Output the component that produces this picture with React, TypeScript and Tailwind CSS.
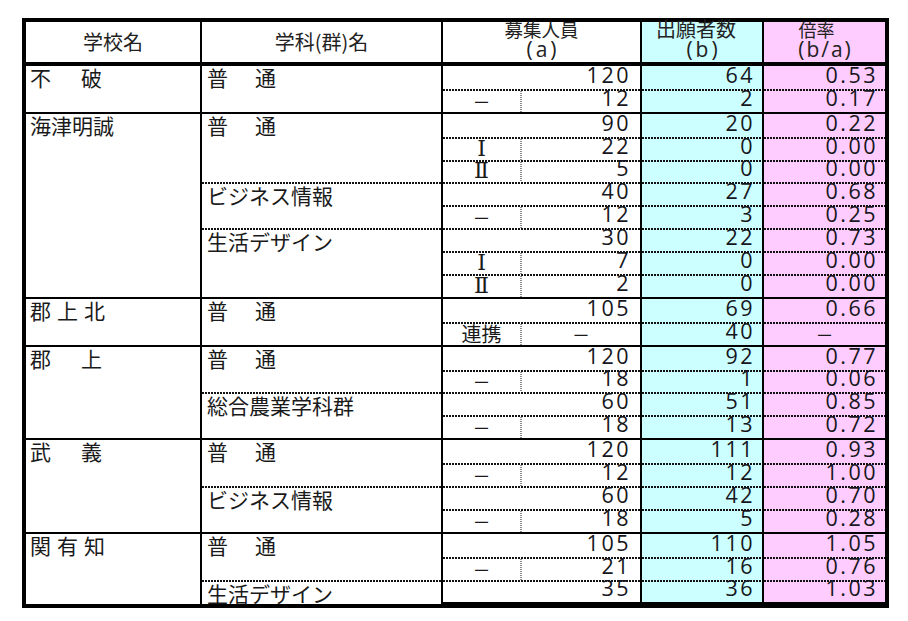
import React from 'react'

type Row = { l?: string; a: string; b: string; r: string; dash?: boolean }
type Dept = { name: string; track?: string; rows: Row[] }
type School = { name: string; track: string; depts: Dept[] }

const FUTSU = 'tracking-[27px]'
const NUM =
  "font-['Open_Sans','Noto_Sans_CJK_JP',sans-serif] font-normal text-[21.5px] leading-[18px] tracking-[2.5px] text-[#161620]"

const schools: School[] = [
  {
    name: '不破',
    track: 'tracking-[30px]',
    depts: [
      {
        name: '普通',
        track: FUTSU,
        rows: [
          { a: '120', b: '64', r: '0.53' },
          { l: '－', a: '12', b: '2', r: '0.17' },
        ],
      },
    ],
  },
  {
    name: '海津明誠',
    track: '',
    depts: [
      {
        name: '普通',
        track: FUTSU,
        rows: [
          { a: '90', b: '20', r: '0.22' },
          { l: 'Ⅰ', a: '22', b: '0', r: '0.00' },
          { l: 'Ⅱ', a: '5', b: '0', r: '0.00' },
        ],
      },
      {
        name: 'ビジネス情報',
        rows: [
          { a: '40', b: '27', r: '0.68' },
          { l: '－', a: '12', b: '3', r: '0.25' },
        ],
      },
      {
        name: '生活デザイン',
        rows: [
          { a: '30', b: '22', r: '0.73' },
          { l: 'Ⅰ', a: '7', b: '0', r: '0.00' },
          { l: 'Ⅱ', a: '2', b: '0', r: '0.00' },
        ],
      },
    ],
  },
  {
    name: '郡上北',
    track: 'tracking-[6px]',
    depts: [
      {
        name: '普通',
        track: FUTSU,
        rows: [
          { a: '105', b: '69', r: '0.66' },
          { l: '連携', a: '－', b: '40', r: '－', dash: true },
        ],
      },
    ],
  },
  {
    name: '郡上',
    track: 'tracking-[30px]',
    depts: [
      {
        name: '普通',
        track: FUTSU,
        rows: [
          { a: '120', b: '92', r: '0.77' },
          { l: '－', a: '18', b: '1', r: '0.06' },
        ],
      },
      {
        name: '総合農業学科群',
        rows: [
          { a: '60', b: '51', r: '0.85' },
          { l: '－', a: '18', b: '13', r: '0.72' },
        ],
      },
    ],
  },
  {
    name: '武義',
    track: 'tracking-[30px]',
    depts: [
      {
        name: '普通',
        track: FUTSU,
        rows: [
          { a: '120', b: '111', r: '0.93' },
          { l: '－', a: '12', b: '12', r: '1.00' },
        ],
      },
      {
        name: 'ビジネス情報',
        rows: [
          { a: '60', b: '42', r: '0.70' },
          { l: '－', a: '18', b: '5', r: '0.28' },
        ],
      },
    ],
  },
  {
    name: '関有知',
    track: 'tracking-[6px]',
    depts: [
      {
        name: '普通',
        track: FUTSU,
        rows: [
          { a: '105', b: '110', r: '1.05' },
          { l: '－', a: '21', b: '16', r: '0.76' },
        ],
      },
      {
        name: '生活デザイン',
        rows: [{ a: '35', b: '36', r: '1.03' }],
      },
    ],
  },
]

function HDots() {
  return (
    <div className="h-[2px] w-full shrink-0 bg-[linear-gradient(90deg,#111_67%,transparent_67%)] bg-[length:3px_2px]" />
  )
}

function Label({ text }: { text?: string }) {
  if (!text) return null
  if (text === 'Ⅰ' || text === 'Ⅱ') {
    return (
      <span className="font-['DejaVu_Serif','Liberation_Serif',serif] text-[22px] leading-[20px] text-[#1a1a1a]">
        {text}
      </span>
    )
  }
  if (text === '－') {
    return <span className="text-[18px] leading-[20px] text-[#1a1a1a]">－</span>
  }
  return <span className="text-[20px] leading-[20px] text-[#1a1a1a]">{text}</span>
}

function SubRow({ row, dotted }: { row: Row; dotted: boolean }) {
  return (
    <div className="flex h-[22.9px] gap-[2px]">
      <div className="flex w-[197px] flex-col bg-white">
        {dotted && <HDots />}
        <div className="flex min-h-0 flex-1 items-end">
          <div className="flex h-full w-[77px] items-end justify-center pb-[1px]">
            <Label text={row.l} />
          </div>
          {row.l ? (
            <div className="h-full w-[2px] bg-[linear-gradient(#8a8a8a_50%,transparent_50%)] bg-[length:2px_2px]" />
          ) : (
            <div className="w-[2px]" />
          )}
          {row.dash ? (
            <div className="flex h-full flex-1 items-end justify-center pb-[1px]">
              <span className="text-[18px] leading-[20px] text-[#1a1a1a]">－</span>
            </div>
          ) : (
            <div className={`flex-1 pb-[5px] pr-[9px] text-right ${NUM}`}>{row.a}</div>
          )}
        </div>
      </div>
      <div className="flex w-[120px] flex-col bg-[#ccffff]">
        {dotted && <HDots />}
        <div className="flex min-h-0 flex-1 items-end justify-end pb-[5px] pr-[7px]">
          <span className={NUM}>{row.b}</span>
        </div>
      </div>
      <div className="flex w-[121px] flex-col bg-[#ffccff]">
        {dotted && <HDots />}
        {row.dash ? (
          <div className="flex min-h-0 flex-1 items-end justify-center pb-[1px]">
            <span className="text-[18px] leading-[20px] text-[#1a1a1a]">－</span>
          </div>
        ) : (
          <div className="flex min-h-0 flex-1 items-end justify-end pb-[5px] pr-[7px]">
            <span className={NUM}>{row.r}</span>
          </div>
        )}
      </div>
    </div>
  )
}

function Group({ school }: { school: School }) {
  return (
    <div className="flex gap-[2px]">
      <div className="w-[174px] bg-white pl-[4px]">
        <div className={`text-[21px] leading-[22px] text-[#1a1a1a] ${school.track}`}>{school.name}</div>
      </div>
      <div className="flex flex-col">
        {school.depts.map((d, di) => (
          <div key={di} className="flex gap-[2px]">
            <div className="flex w-[239px] flex-col bg-white">
              {di > 0 && <HDots />}
              <div className={`pl-[5px] text-[21px] leading-[22px] text-[#1a1a1a] ${d.track ?? ''}`}>{d.name}</div>
            </div>
            <div className="flex flex-col">
              {d.rows.map((r, ri) => (
                <SubRow key={ri} row={r} dotted={di > 0 || ri > 0} />
              ))}
            </div>
          </div>
        ))}
      </div>
    </div>
  )
}

export default function App() {
  return (
    <div className="min-h-screen bg-white pl-[22px] pt-[18px] font-['Noto_Sans_CJK_JP','Noto_Sans',sans-serif]">
      <div className="flex w-[867px] flex-col gap-[2px] border-4 border-black bg-black">
        <div className="mb-[2px] flex h-[40px] gap-[2px] text-[#222]">
          <div className="flex w-[174px] items-center justify-center bg-white text-[20px]">学校名</div>
          <div className="flex w-[239px] items-center justify-center bg-white text-[20px]">学科(群)名</div>
          <div className="flex w-[197px] flex-col items-center bg-white">
            <div className="-mt-[2px] text-[18.5px] leading-[18px]">募集人員</div>
            <div className="pl-[3px] font-['Open_Sans',sans-serif] text-[21px] leading-[22px] tracking-[3px]">
              (a)
            </div>
          </div>
          <div className="flex w-[120px] flex-col items-center bg-[#ccffff]">
            <div className="-mt-[2px] pr-[12px] text-[20px] leading-[18px]">出願者数</div>
            <div className="pl-[3px] font-['Open_Sans',sans-serif] text-[21px] leading-[22px] tracking-[3px]">
              (b)
            </div>
          </div>
          <div className="flex w-[121px] flex-col items-center bg-[#ffccff]">
            <div className="-mt-[2px] pr-[16px] text-[18px] leading-[18px]">倍率</div>
            <div className="pl-[2px] font-['Open_Sans',sans-serif] text-[21px] leading-[22px] tracking-[2px]">
              (b/a)
            </div>
          </div>
        </div>
        {schools.map((s, i) => (
          <Group key={i} school={s} />
        ))}
      </div>
    </div>
  )
}
